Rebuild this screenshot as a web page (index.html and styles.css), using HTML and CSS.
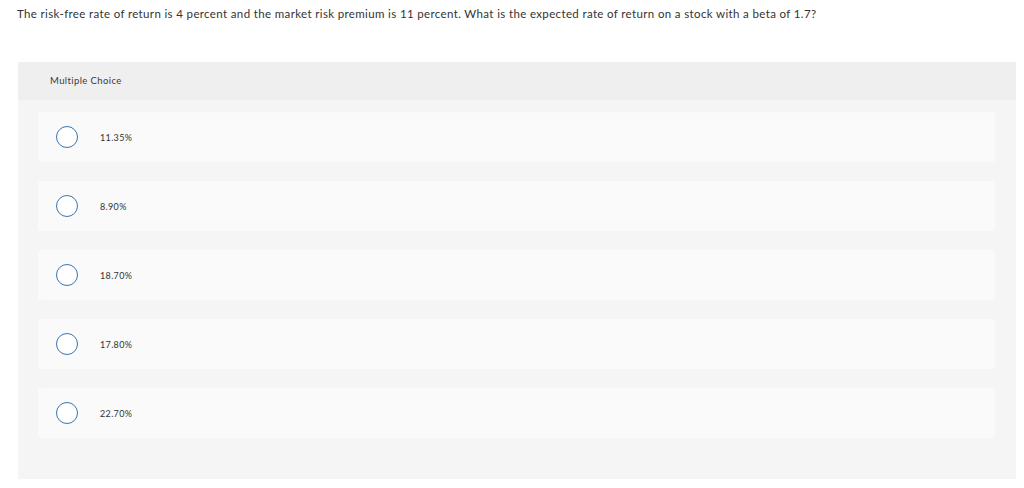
FILE: index.html
```html
<!DOCTYPE html>
<html>
<head>
<meta charset="utf-8">
<link rel="stylesheet" href="styles.css">
</head>
<body>
<p class="question">The risk-free rate of return is 4 percent and the market risk premium is 11 percent. What is the expected rate of return on a stock with a beta of 1.7?</p>
<div class="panel">
  <div class="panel-head">Multiple Choice</div>
  <div class="options">
    <div class="option"><span class="radio"></span><span class="label">11.35%</span></div>
    <div class="option"><span class="radio"></span><span class="label">8.90%</span></div>
    <div class="option"><span class="radio"></span><span class="label">18.70%</span></div>
    <div class="option"><span class="radio"></span><span class="label">17.80%</span></div>
    <div class="option"><span class="radio"></span><span class="label">22.70%</span></div>
  </div>
</div>
</body>
</html>
```
FILE: styles.css
```css
html, body {
  margin: 0;
  padding: 0;
  background: #ffffff;
}
body {
  font-family: "Lato", "Liberation Sans", sans-serif;
  color: #333333;
}
.question {
  margin: 0;
  padding: 7px 0 0 17px;
  height: 62px;
  box-sizing: border-box;
  font-size: 11.5px;
  line-height: 14px;
  letter-spacing: 0.36px;
}
.panel {
  margin-left: 18px;
  width: 998px;
  background: #f5f5f5;
  padding-bottom: 41px;
}
.panel-head {
  height: 38px;
  background: #efefef;
  padding-left: 32px;
  font-size: 9.5px;
  line-height: 38px;
  letter-spacing: 0.4px;
  color: #3a3a3a;
}
.options {
  display: flex;
  flex-direction: column;
  gap: 19px;
  padding: 12px 21px 0 20px;
}
.option {
  height: 50px;
  background: #fafafa;
  border-radius: 3px;
  display: flex;
  align-items: center;
  padding-left: 18px;
}
.radio {
  width: 22px;
  height: 22px;
  box-sizing: border-box;
  border: 1.5px solid #3a74b2;
  border-radius: 50%;
  background: #ffffff;
  flex: none;
}
.label {
  margin-left: 22px;
  font-size: 9px;
  letter-spacing: 0.35px;
  color: #333333;
}
```
